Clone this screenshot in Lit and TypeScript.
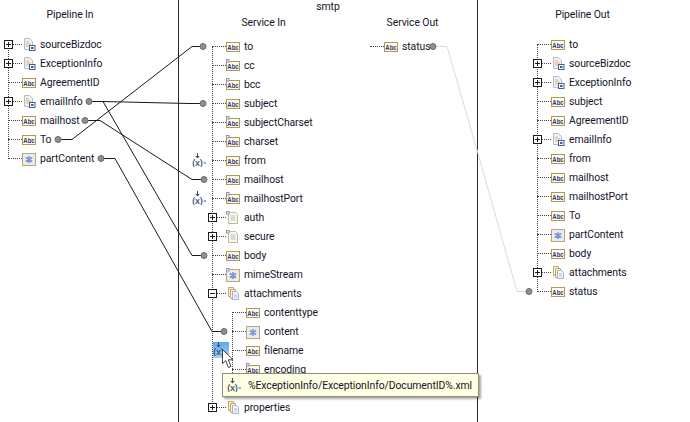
import { LitElement, html, css, svg } from "lit";
import { customElement } from "lit/decorators.js";

type Kind = "abc" | "docref" | "doc" | "obj" | "list" | "none";
interface Node {
  name: string;
  kind: Kind;
  opt?: boolean;
  exp?: "plus" | "minus";
  variable?: boolean;
  children?: Node[];
}

const abc = (name: string, opt = false, variable = false): Node => ({ name, kind: "abc", opt, variable });

const pipelineIn: Node[] = [
  { name: "sourceBizdoc", kind: "docref", exp: "plus" },
  { name: "ExceptionInfo", kind: "docref", exp: "plus" },
  abc("AgreementID"),
  { name: "emailInfo", kind: "docref", exp: "plus" },
  abc("mailhost"),
  abc("To"),
  { name: "partContent", kind: "obj" },
];

const serviceIn: Node[] = [
  abc("to"),
  abc("cc", true),
  abc("bcc", true),
  abc("subject"),
  abc("subjectCharset", true),
  abc("charset", true),
  abc("from", false, true),
  abc("mailhost"),
  abc("mailhostPort", true, true),
  { name: "auth", kind: "doc", opt: true, exp: "plus" },
  { name: "secure", kind: "doc", opt: true, exp: "plus" },
  abc("body"),
  { name: "mimeStream", kind: "obj", opt: true },
  {
    name: "attachments",
    kind: "list",
    exp: "minus",
    children: [
      abc("contenttype"),
      { name: "content", kind: "obj" },
      abc("filename"),
      abc("encoding", true),
      { name: "", kind: "none" },
    ],
  },
  { name: "properties", kind: "list", exp: "plus" },
];

const pipelineOut: Node[] = [
  abc("to"),
  { name: "sourceBizdoc", kind: "docref", exp: "plus" },
  { name: "ExceptionInfo", kind: "docref", exp: "plus" },
  abc("subject"),
  abc("AgreementID"),
  { name: "emailInfo", kind: "docref", exp: "plus" },
  abc("from"),
  abc("mailhost"),
  abc("mailhostPort"),
  abc("To"),
  { name: "partContent", kind: "obj" },
  abc("body"),
  { name: "attachments", kind: "list", exp: "plus" },
  abc("status"),
];

const notch = svg`<rect x="0.5" y="0.5" width="2.5" height="2.5" fill="#fff" stroke="#8d93a8"/>`;

function icon(kind: Kind, opt?: boolean) {
  switch (kind) {
    case "abc":
      return html`<svg class="icon" width="14" height="13" viewBox="0 0 14 13">
        <rect x="0.5" y="2.5" width="13" height="9" fill="#fffbe8" stroke="#b2975a"/>
        <text text-anchor="middle" transform="translate(7 10) scale(1 1.35)" class="abc">Abc</text>
        ${opt ? notch : ""}
      </svg>`;
    case "docref":
      return html`<svg class="icon" width="14" height="13" viewBox="0 0 14 13">
        <path d="M2.5.5h5l3 3v8h-8z" fill="#eef2f8" stroke="#b3bccb"/>
        <path d="M4 4h3M4 6h5M4 8h4" stroke="#e0b56c"/>
        <rect x="7.5" y="7.5" width="5.5" height="5" fill="#fff" stroke="#3d5d96"/>
        <rect x="9" y="9" width="2.5" height="2" fill="#3d5d96"/>
      </svg>`;
    case "doc":
      return html`<svg class="icon" width="14" height="13" viewBox="0 0 14 13">
        <path d="M2.5 1.5h7l2 2v9h-9z" fill="#fbf9ee" stroke="#c4b88e"/>
        <path d="M4.5 5h5M4.5 7h5M4.5 9h5" stroke="#a9bcd8"/>
        ${opt ? notch : ""}
      </svg>`;
    case "obj":
      return html`<svg class="icon" width="14" height="14" viewBox="0 0 14 14">
        <rect x="0.5" y="1.5" width="13" height="12" fill="#e8edf5" stroke="#c2a56c"/>
        <path d="M7 4v7M3.8 5.5l6.4 4M10.2 5.5l-6.4 4" stroke="#7e97c6" stroke-width="1.6"/>
        ${opt ? notch : ""}
      </svg>`;
    case "list":
      return html`<svg class="icon" width="14" height="13" viewBox="0 0 14 13">
        <path d="M2.5.5h5v9h-5z" fill="#f8f3dc" stroke="#c4a86c"/>
        <path d="M4.5 2.5h5v9h-5z" fill="#f8f3dc" stroke="#c4a86c"/>
        <path d="M6.5 4.5h4l2 2v6h-6z" fill="#f3f6fb" stroke="#a6b3c8"/>
        <path d="M8 8h3M8 10h3" stroke="#a9bcd8"/>
      </svg>`;
    default:
      return html`<span class="icon blank"></span>`;
  }
}

function varIcon() {
  return html`<svg width="14" height="14" viewBox="0 0 14 14">
    <path d="M5.5 0v3.5" stroke="#3d4a63"/>
    <path d="M3.3 3h4.4l-2.2 2.4z" fill="#3d4a63"/>
    <text x="5.5" y="12.5" text-anchor="middle" class="vartext">(x)</text>
    <rect x="11.5" y="9" width="2.5" height="2" fill="#9fb0cc"/>
  </svg>`;
}

function expander(kind: "plus" | "minus") {
  return html`<svg class="exp" width="9" height="9" viewBox="0 0 9 9">
    <rect x="0.5" y="0.5" width="8" height="8" fill="#fff" stroke="#1c1c1c"/>
    <path d=${kind === "plus" ? "M2 4.5h5M4.5 2v5" : "M2 4.5h5"} stroke="#1c1c1c"/>
  </svg>`;
}

function tree(nodes: Node[]): unknown {
  return html`<div class="tree">
    ${nodes.map(
      (n) => html`<div class="row">
          ${n.exp ? expander(n.exp) : ""}
          ${n.variable ? html`<span class="var">${varIcon()}</span>` : ""}
          <span class="stem"></span>
          ${icon(n.kind, n.opt)}
          <span class="label">${n.name}</span>
        </div>
        ${n.children ? html`<div class="nested">${tree(n.children)}</div>` : ""}`
    )}
  </div>`;
}

const blackWires = [
  "M58 139.5H72L192 46.5H203",
  "M89 101.5H103L189 103.5H203",
  "M103 101.5L192 255.5H204",
  "M85 120.5H100L192 179.5H204",
  "M101 158.5H115L212 331.5H224",
];
const dots: [number, number][] = [
  [58, 139.5], [89, 101.5], [85, 120.5], [101, 158.5],
  [203, 46.5], [203, 103.5], [204, 179.5], [204, 255.5], [224, 331.5],
  [433, 46.5], [529, 291.5],
];

@customElement("app-root")
export class AppRoot extends LitElement {
  static styles = css`
    :host {
      display: block;
      position: relative;
      width: 690px;
      height: 422px;
      overflow: hidden;
      background: #fff;
      font-family: Roboto, sans-serif;
      font-size: 10.4px;
      letter-spacing: -0.08px;
      color: #14142a;
    }
    .page { display: flex; height: 422px; }
    .side { flex: none; }
    .in { width: 178px; }
    .out { flex: 1; }
    .middle {
      flex: none;
      width: 298px;
      border-left: 1px solid #2a2a2a;
      border-right: 1px solid #2a2a2a;
    }
    .title { height: 13px; line-height: 13px; text-align: center; white-space: nowrap; }
    .in .title { width: 140px; margin-top: 8px; }
    .out .title { width: 209px; margin-top: 8px; }
    .in .treewrap { margin: 14px 0 0 8px; }
    .out .treewrap { margin: 14px 0 0 59px; }
    .smtp { height: 13px; line-height: 13px; text-align: center; }
    .cols { display: flex; margin-top: 3px; }
    .col1 { width: 169px; flex: none; }
    .col2 { flex: 1; }
    .col1 .treewrap { margin: 8px 0 0 33px; }
    .col2 .treewrap { margin: 8px 0 0 22px; }
    .col2 .title { width: 129px; }
    .col2 .tree::before { display: none; }

    .tree { position: relative; }
    .tree::before {
      content: "";
      position: absolute;
      left: 0;
      top: 9px;
      bottom: 9px;
      border-left: 1px dotted #444;
    }
    .nested { margin-left: 20px; }
    .row { position: relative; display: flex; align-items: center; height: 19px; white-space: nowrap; }
    .stem { flex: none; width: 14px; border-top: 1px dotted #444; }
    .icon { flex: none; display: block; overflow: visible; }
    .blank { width: 14px; }
    .label { margin-left: 4px; line-height: 19px; }
    .exp { position: absolute; left: -4px; top: 5px; }
    .var { position: absolute; left: -20px; top: 2px; line-height: 0; }
    .abc { font: bold 6px "Liberation Sans", sans-serif; letter-spacing: 0; fill: #1d3a78; }
    .vartext { font: 9px "Liberation Sans", sans-serif; letter-spacing: 0; fill: #2f4470; stroke: #2f4470; stroke-width: 0.2; }

    .wires { position: absolute; left: 0; top: 0; pointer-events: none; }
    .wire { fill: none; stroke: #1a1a1a; }
    .ghost { fill: none; stroke: #dcdcdc; }
    .dot { fill: #8f8f8f; stroke: #6c6c6c; }

    .hover {
      position: absolute;
      left: 213px;
      top: 342px;
      width: 16px;
      height: 16px;
      line-height: 0;
      background: linear-gradient(#5aa9ee, #a9d2f5);
    }
    .cursor { position: absolute; left: 222px; top: 349px; }
    .tip {
      position: absolute;
      left: 222px;
      top: 373px;
      width: 257px;
      height: 24px;
      box-sizing: border-box;
      display: flex;
      align-items: center;
      gap: 7px;
      padding-left: 4px;
      background: #ffffe1;
      border: 1px solid #8e8e80;
      box-shadow: 2px 2px 2px rgba(0, 0, 0, 0.35);
      white-space: nowrap;
    }
    .tip svg { flex: none; }
  `;

  render() {
    return html`
      <div class="page">
        <div class="side in">
          <div class="title">Pipeline In</div>
          <div class="treewrap">${tree(pipelineIn)}</div>
        </div>
        <div class="middle">
          <div class="smtp">smtp</div>
          <div class="cols">
            <div class="col1">
              <div class="title">Service In</div>
              <div class="treewrap">${tree(serviceIn)}</div>
            </div>
            <div class="col2">
              <div class="title">Service Out</div>
              <div class="treewrap">${tree([abc("status")])}</div>
            </div>
          </div>
        </div>
        <div class="side out">
          <div class="title">Pipeline Out</div>
          <div class="treewrap">${tree(pipelineOut)}</div>
        </div>
      </div>
      <svg class="wires" width="690" height="422" viewBox="0 0 690 422">
        <path class="ghost" d="M433 46.5H447L477 150L517 291.5H529"/>
        ${blackWires.map((d) => svg`<path class="wire" d=${d}/>`)}
        ${dots.map(([x, y]) => svg`<circle class="dot" cx=${x} cy=${y} r="3"/>`)}
      </svg>
      <div class="hover">${varIcon()}</div>
      <svg class="cursor" width="13" height="20" viewBox="0 0 13 20">
        <path d="M.5.5V14.5L3.7 11.6L6.4 18.5L9 17.4L6.3 10.8H11z" fill="#fff" stroke="#444"/>
      </svg>
      <div class="tip">${varIcon()}<span>%ExceptionInfo/ExceptionInfo/DocumentID%.xml</span></div>
    `;
  }
}
